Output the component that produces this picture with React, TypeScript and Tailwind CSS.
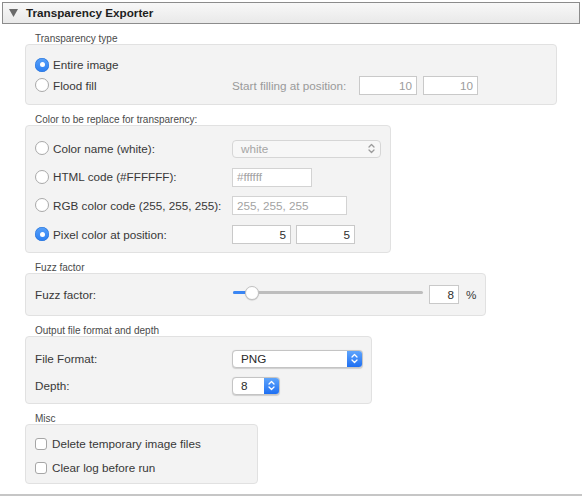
import React from 'react'

const FONT = "font-['Liberation_Sans',Arial,sans-serif]"

function Group({ label, w, h, children }: { label: string; w: string; h: string; children: React.ReactNode }) {
  return (
    <div className="mt-[9px]">
      <div className="h-[11px] pl-[10px] text-[10px] leading-[11px] text-[#4a4a4a]">{label}</div>
      <div className={`${w} ${h} rounded-[4px] border border-[#e1e1e1] bg-[#f3f3f3] pl-[9px]`}>{children}</div>
    </div>
  )
}

function Radio({ checked }: { checked?: boolean }) {
  if (checked) {
    return (
      <span className="flex h-[14px] w-[14px] shrink-0 items-center justify-center rounded-full bg-gradient-to-b from-[#57a0f8] to-[#2a7ff3] shadow-[inset_0_0_0_0.5px_#2a74d8]">
        <span className="h-[5px] w-[5px] rounded-full bg-white" />
      </span>
    )
  }
  return <span className="h-[14px] w-[14px] shrink-0 rounded-full border border-[#a9a9a9] bg-white" />
}

function Field({ value, w, dim }: { value: string; w: string; dim?: boolean }) {
  return (
    <div
      className={`${w} flex h-[19px] items-center border border-[#c9c9c9] bg-white px-[4px] ${
        dim ? 'justify-end text-[#9c9c9c]' : 'justify-end text-[#2e2e2e]'
      }`}
    >
      {value}
    </div>
  )
}

function Hint({ value, w }: { value: string; w: string }) {
  return (
    <div className={`${w} flex h-[19px] items-center border border-[#d3d3d3] bg-white px-[4px] text-[#a3a3a3]`}>{value}</div>
  )
}

function Chevrons({ color }: { color: string }) {
  return (
    <svg width="7" height="11" viewBox="0 0 7 11" fill="none" stroke={color} strokeWidth="1.3" strokeLinecap="round" strokeLinejoin="round">
      <path d="M1 4 L3.5 1.5 L6 4" />
      <path d="M1 7 L3.5 9.5 L6 7" />
    </svg>
  )
}

function PopUp({ value, w }: { value: string; w: string }) {
  return (
    <div className={`${w} flex h-[18px] overflow-hidden rounded-[4px] border border-[#c4c4c4] bg-white shadow-[0_0.5px_1px_rgba(0,0,0,0.15)]`}>
      <span className="flex flex-1 items-center pl-[8px] text-[#2a2a2a]">{value}</span>
      <span className="flex w-[15px] items-center justify-center bg-gradient-to-b from-[#5ea4fb] to-[#1e6ff2]">
        <Chevrons color="#ffffff" />
      </span>
    </div>
  )
}

function Check({ label }: { label: string }) {
  return (
    <div className="flex h-[24px] items-center">
      <span className="h-[12px] w-[12px] shrink-0 rounded-[3px] border border-[#a6a6a6] bg-white" />
      <span className="ml-[5px]">{label}</span>
    </div>
  )
}

export default function App() {
  return (
    <div className={`${FONT} h-[496px] w-[582px] overflow-hidden bg-white pt-[2px] text-[11.7px] text-[#383838]`}>
      {/* Section header */}
      <div className="mx-[2px] flex h-[22px] items-center border border-[#8c8c8c] bg-gradient-to-b from-[#f8f8f8] to-[#e9e9e9] pl-[6px]">
        <svg width="9" height="8" viewBox="0 0 9 8">
          <path d="M0 0 L9 0 L4.5 8 Z" fill="#6a6a6a" />
        </svg>
        <span className="ml-[8px] text-[11.7px] font-bold text-[#1e1e1e]">Transparency Exporter</span>
      </div>

      <div className="pl-[25px]">
        <Group label="Transparency type" w="w-[532px]" h="h-[61px]">
          <div className="flex flex-col pt-[9px]">
            <div className="flex h-[21px] items-center">
              <Radio checked />
              <span className="ml-[4px]">Entire image</span>
            </div>
            <div className="flex h-[21px] items-center">
              <div className="flex w-[197px] items-center">
                <Radio />
                <span className="ml-[4px]">Flood fill</span>
              </div>
              <span className="w-[127px] text-[#9a9a9a]">Start filling at position:</span>
              <div className="flex gap-[6px]">
                <Field value="10" w="w-[58px]" dim />
                <Field value="10" w="w-[55px]" dim />
              </div>
            </div>
          </div>
        </Group>

        <Group label="Color to be replace for transparency:" w="w-[366px]" h="h-[128px]">
          <div className="grid grid-cols-[197px_auto] grid-rows-[29px_28px_29px_29px] items-center pt-[8px]">
            <div className="flex items-center">
              <Radio />
              <span className="ml-[4px]">Color name (white):</span>
            </div>
            <div className="flex h-[18px] w-[149px] items-center justify-between rounded-[4px] border border-[#d6d6d6] bg-[#f7f7f7] pl-[8px] pr-[5px] text-[#a5a5a5]">
              <span>white</span>
              <Chevrons color="#9b9b9b" />
            </div>

            <div className="flex items-center">
              <Radio />
              <span className="ml-[4px]">HTML code (#FFFFFF):</span>
            </div>
            <Hint value="#ffffff" w="w-[80px]" />

            <div className="flex items-center">
              <Radio />
              <span className="ml-[4px]">RGB color code (255, 255, 255):</span>
            </div>
            <Hint value="255, 255, 255" w="w-[115px]" />

            <div className="flex items-center">
              <Radio checked />
              <span className="ml-[4px]">Pixel color at position:</span>
            </div>
            <div className="flex gap-[5px]">
              <Field value="5" w="w-[59px]" />
              <Field value="5" w="w-[59px]" />
            </div>
          </div>
        </Group>

        <Group label="Fuzz factor" w="w-[461px]" h="h-[43px]">
          <div className="flex h-full items-center">
            <span className="w-[198px]">Fuzz factor:</span>
            <div className="relative h-[14px] w-[190px] -translate-y-[2px]">
              <div className="absolute left-0 right-0 top-[5.5px] h-[3px] rounded-full bg-[#bdbdbd]" />
              <div className="absolute left-0 top-[5.5px] h-[3px] w-[16px] rounded-full bg-[#3a86f4]" />
              <div className="absolute left-[12px] top-0 h-[14px] w-[14px] rounded-full border border-[#c2c2c2] bg-white shadow-[0_0.5px_1px_rgba(0,0,0,0.2)]" />
            </div>
            <div className="ml-[6px]">
              <Field value="8" w="w-[30px]" />
            </div>
            <span className="ml-[7px]">%</span>
          </div>
        </Group>

        <Group label="Output file format and depth" w="w-[347px]" h="h-[68px]">
          <div className="grid grid-cols-[197px_auto] grid-rows-[27px_27px] items-center pt-[8px]">
            <span>File Format:</span>
            <PopUp value="PNG" w="w-[131px]" />
            <span>Depth:</span>
            <PopUp value="8" w="w-[48px]" />
          </div>
        </Group>

        <Group label="Misc" w="w-[233px]" h="h-[60px]">
          <div className="flex flex-col pt-[7px]">
            <Check label="Delete temporary image files" />
            <Check label="Clear log before run" />
          </div>
        </Group>
      </div>

      <div className="mt-[10px] h-[2px] w-full bg-[#c6c6c6]" />
    </div>
  )
}
